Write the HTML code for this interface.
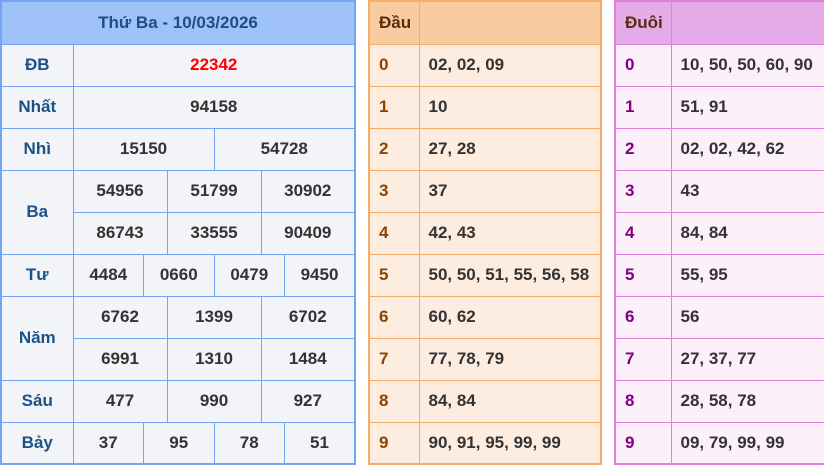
<!DOCTYPE html>
<html><head><meta charset="utf-8"><style>
*{margin:0;padding:0;box-sizing:border-box}
body{width:824px;height:464px;background:#fff;font-family:"Liberation Sans",Arial,sans-serif;font-weight:bold;font-size:17px;position:relative;overflow:hidden}
table{border-collapse:collapse;position:absolute;top:0;table-layout:fixed}
td{height:42px;vertical-align:middle}
#L{left:0;width:356px;border:2px solid #74a5f2}
#L td{border:1px solid #74a5f2;background:#f3f4f8;color:#333;text-align:center}
#L td.h{background:#9fc2f9;color:#1d4f80;height:43px}
#L td.lb{color:#1a5288}
#M{left:368px;width:234px;border:2px solid #f5ac68}
#M td{border:1px solid #f5ac68;background:#fdede1;color:#333;padding-left:9px}
#M td.h{background:#f9cba0;color:#5a2d0c;height:43px}
#M td.d{color:#8a4400}
#R{left:614px;width:212px;border:2px solid #e07fdc}
#R td{border:1px solid #e07fdc;background:#fcf0fb;color:#333;padding-left:9px}
#R td.h{background:#e4abe8;color:#5a2d0c;height:43px}
#R td.d{color:#800080}
</style></head><body>
<table id="L">
<colgroup><col style="width:72px"><col><col><col><col><col><col><col><col><col><col><col><col></colgroup>
<tr><td class="h" colspan="13">Thứ Ba - 10/03/2026</td></tr>
<tr><td class="lb">ĐB</td><td colspan="12" style="color:#f00">22342</td></tr>
<tr><td class="lb">Nhất</td><td colspan="12">94158</td></tr>
<tr><td class="lb">Nhì</td><td colspan="6">15150</td><td colspan="6">54728</td></tr>
<tr><td class="lb" rowspan="2">Ba</td><td colspan="4">54956</td><td colspan="4">51799</td><td colspan="4">30902</td></tr>
<tr><td colspan="4">86743</td><td colspan="4">33555</td><td colspan="4">90409</td></tr>
<tr><td class="lb">Tư</td><td colspan="3">4484</td><td colspan="3">0660</td><td colspan="3">0479</td><td colspan="3">9450</td></tr>
<tr><td class="lb" rowspan="2">Năm</td><td colspan="4">6762</td><td colspan="4">1399</td><td colspan="4">6702</td></tr>
<tr><td colspan="4">6991</td><td colspan="4">1310</td><td colspan="4">1484</td></tr>
<tr><td class="lb">Sáu</td><td colspan="4">477</td><td colspan="4">990</td><td colspan="4">927</td></tr>
<tr><td class="lb">Bảy</td><td colspan="3">37</td><td colspan="3">95</td><td colspan="3">78</td><td colspan="3">51</td></tr>
</table>
<table id="M">
<colgroup><col style="width:50px"><col></colgroup>
<tr><td class="h">Đầu</td><td class="h"></td></tr>
<tr><td class="d">0</td><td>02, 02, 09</td></tr>
<tr><td class="d">1</td><td>10</td></tr>
<tr><td class="d">2</td><td>27, 28</td></tr>
<tr><td class="d">3</td><td>37</td></tr>
<tr><td class="d">4</td><td>42, 43</td></tr>
<tr><td class="d">5</td><td>50, 50, 51, 55, 56, 58</td></tr>
<tr><td class="d">6</td><td>60, 62</td></tr>
<tr><td class="d">7</td><td>77, 78, 79</td></tr>
<tr><td class="d">8</td><td>84, 84</td></tr>
<tr><td class="d">9</td><td>90, 91, 95, 99, 99</td></tr>
</table>
<table id="R">
<colgroup><col style="width:56px"><col></colgroup>
<tr><td class="h">Đuôi</td><td class="h"></td></tr>
<tr><td class="d">0</td><td>10, 50, 50, 60, 90</td></tr>
<tr><td class="d">1</td><td>51, 91</td></tr>
<tr><td class="d">2</td><td>02, 02, 42, 62</td></tr>
<tr><td class="d">3</td><td>43</td></tr>
<tr><td class="d">4</td><td>84, 84</td></tr>
<tr><td class="d">5</td><td>55, 95</td></tr>
<tr><td class="d">6</td><td>56</td></tr>
<tr><td class="d">7</td><td>27, 37, 77</td></tr>
<tr><td class="d">8</td><td>28, 58, 78</td></tr>
<tr><td class="d">9</td><td>09, 79, 99, 99</td></tr>
</table>
</body></html>
